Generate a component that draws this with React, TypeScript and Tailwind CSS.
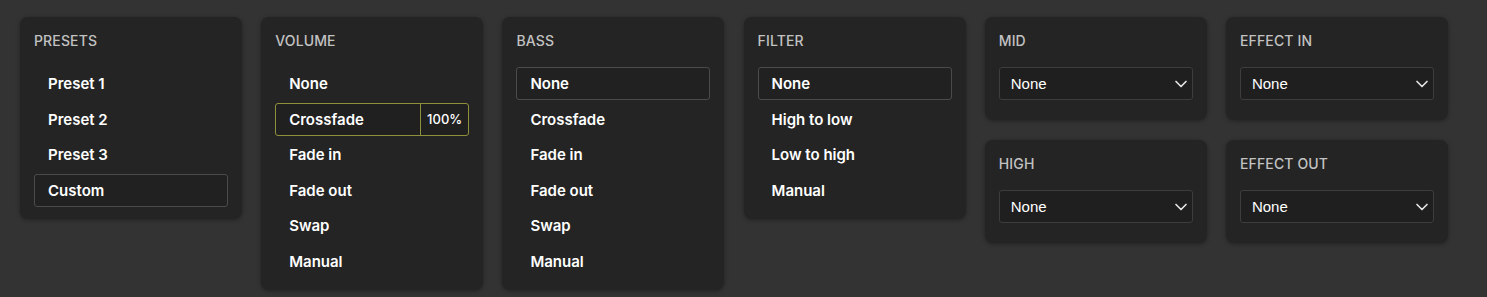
import { ChevronDown } from "lucide-react";
import clsx from "clsx";

const card = "w-[222px] shrink-0 rounded-lg bg-[#242424] px-[14px] pt-[14px] shadow-[0_1px_4px_rgba(0,0,0,0.35)]";

function Title({ children }: { children: string }) {
  return (
    <div className="text-[14px] font-medium uppercase leading-5 tracking-[0.01em] text-[#c2c2c2]">
      {children}
    </div>
  );
}

type Item = { label: string; selected?: boolean; value?: string };

function ListCard({ title, items }: { title: string; items: Item[] }) {
  return (
    <div className={clsx(card, "pb-[12px]")}>
      <Title>{title}</Title>
      <div className="mt-[16px] flex flex-col gap-[2.5px]">
        {items.map((item) => {
          if (item.value) {
            return (
              <div
                key={item.label}
                className="flex h-[33px] items-stretch rounded-[3px] border border-[#8e903c] bg-[#202020]"
              >
                <span className="flex flex-1 items-center pl-[13px] pt-[2px] text-[15px] font-semibold text-white">
                  {item.label}
                </span>
                <span className="flex items-center border-l border-[#8e903c] px-[6px] pt-[1px] text-[13px] font-medium text-white">
                  {item.value}
                </span>
              </div>
            );
          }
          return (
            <div
              key={item.label}
              className={clsx(
                "flex h-[33px] items-center rounded-[3px] border pl-[13px] pt-[2px] text-[15px] font-semibold text-white",
                item.selected ? "border-[#4b4b4b] bg-[#212121]" : "border-transparent"
              )}
            >
              {item.label}
            </div>
          );
        })}
      </div>
    </div>
  );
}

function SelectCard({ title }: { title: string }) {
  return (
    <div className={clsx(card, "pb-[20px]")}>
      <Title>{title}</Title>
      <div className="mt-[16px] flex h-[33px] items-center justify-between rounded-[3px] border border-[#3d3d3d] bg-[#1f1f1f] pl-[11px] pr-[1px]">
        <span className="pt-[1px] font-['Liberation_Sans',Arial,sans-serif] text-[15px] text-white">None</span>
        <ChevronDown size={20} strokeWidth={2} className="text-[#e5e5e5]" />
      </div>
    </div>
  );
}

const moves = ["Crossfade", "Fade in", "Fade out", "Swap", "Manual"];

export default function App() {
  return (
    <div className="flex h-screen w-full items-start gap-[19.2px] bg-[#333333] pl-[20px] pt-[17px] font-['Inter','Noto_Sans',sans-serif] antialiased">
      <ListCard
        title="Presets"
        items={[
          { label: "Preset 1" },
          { label: "Preset 2" },
          { label: "Preset 3" },
          { label: "Custom", selected: true },
        ]}
      />
      <ListCard
        title="Volume"
        items={[
          { label: "None" },
          { label: "Crossfade", value: "100%" },
          ...moves.slice(1).map((m) => ({ label: m })),
        ]}
      />
      <ListCard
        title="Bass"
        items={[{ label: "None", selected: true }, ...moves.map((m) => ({ label: m }))]}
      />
      <ListCard
        title="Filter"
        items={[
          { label: "None", selected: true },
          { label: "High to low" },
          { label: "Low to high" },
          { label: "Manual" },
        ]}
      />
      <div className="flex flex-col gap-[20px]">
        <SelectCard title="Mid" />
        <SelectCard title="High" />
      </div>
      <div className="flex flex-col gap-[20px]">
        <SelectCard title="Effect in" />
        <SelectCard title="Effect out" />
      </div>
    </div>
  );
}
